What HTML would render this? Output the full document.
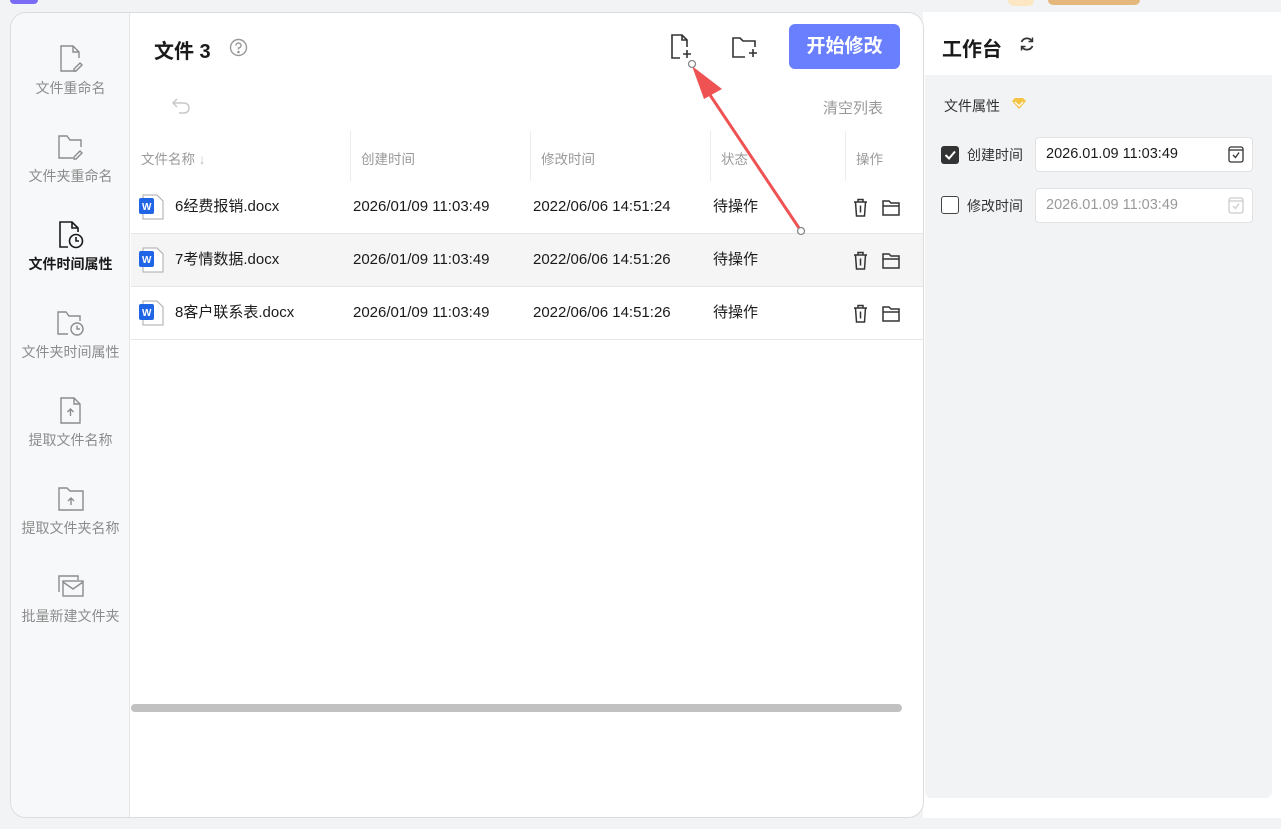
<!DOCTYPE html>
<html><head><meta charset="utf-8"><style>
*{margin:0;padding:0;box-sizing:border-box}
body{width:1281px;height:829px;background:#f2f3f5;position:relative;overflow:hidden;font-family:"Liberation Sans","Noto Sans CJK SC",sans-serif;color:#1a1a1a}
.a{position:absolute}
.card{left:10px;top:12px;width:914px;height:806px;background:#fff;border:1px solid #dcdcdc;border-radius:16px;overflow:hidden}
.side{left:0;top:0;width:119px;height:806px;background:#f7f8fa;border-right:1px solid #e4e6ea}
.nav{position:absolute;left:0;width:119px;text-align:center;font-size:14px;color:#8c8c8c}
.nav svg{display:block;margin:0 auto 4px}
.th{font-size:13.5px;color:#9a9a9a;top:135px}
.row{position:absolute;left:120px;width:794px;height:53px;border-bottom:1px solid #e6e6e6;font-size:15px}
.row span{position:absolute;top:0;line-height:52px}
.sep{position:absolute;top:118px;width:1px;height:50px;background:#ececec}
</style></head><body>
<div class="a" style="left:10px;top:0;width:28px;height:4px;background:#7b6cf5;border-radius:0 0 6px 6px"></div>
<div class="a" style="left:1008px;top:0;width:26px;height:6px;background:#fde7c3;border-radius:0 0 12px 12px"></div>
<div class="a" style="left:1048px;top:0;width:92px;height:5px;background:#e4b77d;border-radius:0 0 12px 12px"></div>

<div class="a" style="left:923px;top:12px;width:358px;height:806px;background:#fff"></div>
<div class="a" style="left:925px;top:75px;width:347px;height:723px;background:#f2f3f5;border-radius:0 0 6px 6px"></div>
<div class="a" style="left:942px;top:33px;font-size:20px;font-weight:bold">工作台</div>
<svg class="a" style="left:1018px;top:35px" width="18" height="18" viewBox="0 0 18 18" fill="none" stroke="#333" stroke-width="1.8"><path d="M14 6A6 6 0 0 0 3.5 7"/><path d="M4 12A6 6 0 0 0 14.5 11"/><path d="M14.5 2.5V6.5H10.5" stroke-width="1.5"/><path d="M3.5 15.5V11.5H7.5" stroke-width="1.5"/></svg>
<div class="a" style="left:944px;top:96px;font-size:14px;color:#333">文件属性</div>
<svg class="a" style="left:1011px;top:97px" width="16" height="13" viewBox="0 0 16 13"><path d="M1 4L4 1H12L15 4L8 12Z" fill="#f5c342"/><path d="M4 5L8 9L12 5" stroke="#fff" stroke-width="1.3" fill="none"/></svg>
<div class="a" style="left:941px;top:146px;width:18px;height:18px;background:#333;border-radius:3px"></div>
<svg class="a" style="left:941px;top:146px" width="18" height="18"><path d="M4.5 9L8 12.5L14 5.5" stroke="#fff" stroke-width="2" fill="none"/></svg>
<div class="a" style="left:967px;top:145px;font-size:14px;color:#333">创建时间</div>
<div class="a" style="left:1035px;top:137px;width:218px;height:35px;background:#fff;border:1px solid #e2e2e2;border-radius:4px"></div>
<div class="a" style="left:1046px;top:146px;font-size:14.5px">2026.01.09 11:03:49</div>
<svg class="a" style="left:1227px;top:145px" width="18" height="19" fill="none" stroke="#333" stroke-width="1.3"><rect x="2" y="2" width="14" height="15" rx="2"/><path d="M2 5H16"/><path d="M6 10L8.5 12.5L12 7.5"/></svg>
<div class="a" style="left:941px;top:196px;width:18px;height:18px;background:#fff;border:1.5px solid #444;border-radius:3px"></div>
<div class="a" style="left:967px;top:196px;font-size:14px;color:#333">修改时间</div>
<div class="a" style="left:1035px;top:188px;width:218px;height:35px;background:#fff;border:1px solid #e2e2e2;border-radius:4px"></div>
<div class="a" style="left:1046px;top:197px;font-size:14.5px;color:#999">2026.01.09 11:03:49</div>
<svg class="a" style="left:1227px;top:196px" width="18" height="19" fill="none" stroke="#ccc" stroke-width="1.3"><rect x="2" y="2" width="14" height="15" rx="2"/><path d="M2 5H16"/><path d="M6 10L8.5 12.5L12 7.5"/></svg>

<div class="a card">
 <div class="a side">
  <div class="nav" style="top:31px"><svg width="26" height="30" fill="none" stroke="#8c8c8c" stroke-width="1.4"><path d="M18 27H3V2H15L21 8V14"/><path d="M15 2V8H21"/><path d="M16 25L22 19L24 21L18 27H16Z"/></svg>文件重命名</div>
  <div class="nav" style="top:119px"><svg width="28" height="30" fill="none" stroke="#8c8c8c" stroke-width="1.4"><path d="M16 26H2V4H10L13 8H24V15"/><path d="M17 25L23 19L25 21L19 27H17Z"/></svg>文件夹重命名</div>
  <div class="nav" style="top:207px;color:#1a1a1a;font-weight:bold"><svg width="28" height="30" fill="none" stroke="#1a1a1a" stroke-width="1.6"><path d="M11 27H3V2H15L21 8V12"/><path d="M15 2V8H21"/><circle cx="19" cy="21" r="6.5"/><path d="M19 17V21H22"/></svg>文件时间属性</div>
  <div class="nav" style="top:295px"><svg width="30" height="30" fill="none" stroke="#8c8c8c" stroke-width="1.4"><path d="M12 26H2V4H10L13 8H24V13"/><circle cx="21" cy="21" r="6"/><path d="M21 17.5V21H24"/></svg>文件夹时间属性</div>
  <div class="nav" style="top:383px"><svg width="26" height="30" fill="none" stroke="#8c8c8c" stroke-width="1.4"><path d="M3 2H16L22 8V27H3Z"/><path d="M16 2V8H22"/><path d="M12.5 20V13M9.5 16L12.5 13L15.5 16"/></svg>提取文件名称</div>
  <div class="nav" style="top:471px"><svg width="28" height="30" fill="none" stroke="#8c8c8c" stroke-width="1.4"><path d="M2 4H10L13 7H26V26H2Z"/><path d="M14 21V14M11 17L14 14L17 17"/></svg>提取文件夹名称</div>
  <div class="nav" style="top:559px"><svg width="30" height="30" fill="none" stroke="#8c8c8c" stroke-width="1.4"><path d="M3 20V4H22V8"/><rect x="7" y="9" width="20" height="15"/><path d="M7 10L17 17L27 10"/></svg>批量新建文件夹</div>
 </div>
 <div class="a" style="left:143px;top:22px;font-size:20px;font-weight:bold">文件 3</div>
 <svg class="a" style="left:218px;top:25px" width="19" height="19" fill="none" stroke="#999" stroke-width="1.4"><circle cx="9.5" cy="9.5" r="8"/><path d="M7 7.5A2.5 2.5 0 1 1 9.5 10V11.5"/><circle cx="9.5" cy="14" r=".6" fill="#999"/></svg>
 <svg class="a" style="left:658px;top:20px" width="26" height="28" fill="none" stroke="#333" stroke-width="1.6"><path d="M11 25H3V2H13L18 7V14"/><path d="M13 2V7H18"/><path d="M18 17V25M14 21H22"/></svg>
 <svg class="a" style="left:720px;top:22px" width="30" height="26" fill="none" stroke="#333" stroke-width="1.6"><path d="M14 22H2V3H9L12 6H24V12"/><path d="M22 14V22M18 18H26"/></svg>
 <div class="a" style="left:778px;top:11px;width:111px;height:45px;background:#6a7ffd;border-radius:6px;color:#fff;font-size:19px;font-weight:bold;text-align:center;line-height:45px">开始修改</div>
 <svg class="a" style="left:160px;top:82px" width="22" height="20" fill="none" stroke="#c8c8c8" stroke-width="1.5"><path d="M6 4L2 8L6 12"/><path d="M2 8H13A5 5 0 0 1 13 18H8"/></svg>
 <div class="a" style="left:812px;top:84px;font-size:15px;color:#999">清空列表</div>
 <div class="sep" style="left:339px"></div><div class="sep" style="left:519px"></div><div class="sep" style="left:699px"></div><div class="sep" style="left:834px"></div>
 <div class="a th" style="left:130px">文件名称 <span style="color:#bbb">↓</span></div>
 <div class="a th" style="left:350px">创建时间</div>
 <div class="a th" style="left:530px">修改时间</div>
 <div class="a th" style="left:710px">状态</div>
 <div class="a th" style="left:845px">操作</div>

 <div class="row" style="top:168px"><span style="left:44px">6经费报销.docx</span><span style="left:222px">2026/01/09 11:03:49</span><span style="left:402px">2022/06/06 14:51:24</span><span style="left:582px">待操作</span></div>
 <div class="row" style="top:221px;background:#f5f5f5"><span style="left:44px">7考情数据.docx</span><span style="left:222px">2026/01/09 11:03:49</span><span style="left:402px">2022/06/06 14:51:26</span><span style="left:582px">待操作</span></div>
 <div class="row" style="top:274px"><span style="left:44px">8客户联系表.docx</span><span style="left:222px">2026/01/09 11:03:49</span><span style="left:402px">2022/06/06 14:51:26</span><span style="left:582px">待操作</span></div>
 <svg class="a" style="left:126px;top:180px" width="30" height="160">
  <g id="w"><path d="M6 2H20L26 8V26H6Z" fill="#fff" stroke="#aaa" stroke-width="1"/><rect x="2" y="5" width="15" height="16" rx="2" fill="#1f65e6"/><text x="5" y="17" font-size="10" font-weight="bold" fill="#fff" font-family="Liberation Sans">W</text></g>
  <use href="#w" y="53"/><use href="#w" y="106"/>
 </svg>
 <svg class="a" style="left:840px;top:184px" width="52" height="150" fill="none" stroke="#333" stroke-width="1.5">
  <g id="ops"><path d="M3 5H16M7 5V2.5H12V5M4.5 5L5.5 19H13.5L14.5 5M9.5 8.5V15.5"/><path d="M32 4H38L40 6H48V18H32Z M32 9H48"/></g>
  <use href="#ops" y="53"/><use href="#ops" y="106"/>
 </svg>
 <div class="a" style="left:120px;top:691px;width:771px;height:8px;background:#c1c1c1;border-radius:4px"></div>
</div>

<svg class="a" style="left:680px;top:55px" width="130" height="185">
 <path d="M121 176L22 28" stroke="#ee5253" stroke-width="3"/>
 <path d="M12 11L42 34L24 44Z" fill="#ee5253"/>
 <circle cx="12" cy="9" r="3.5" fill="#fff" stroke="#888" stroke-width="1.3"/>
 <circle cx="121" cy="176" r="3.5" fill="#fff" stroke="#888" stroke-width="1.3"/>
</svg>
</body></html>
